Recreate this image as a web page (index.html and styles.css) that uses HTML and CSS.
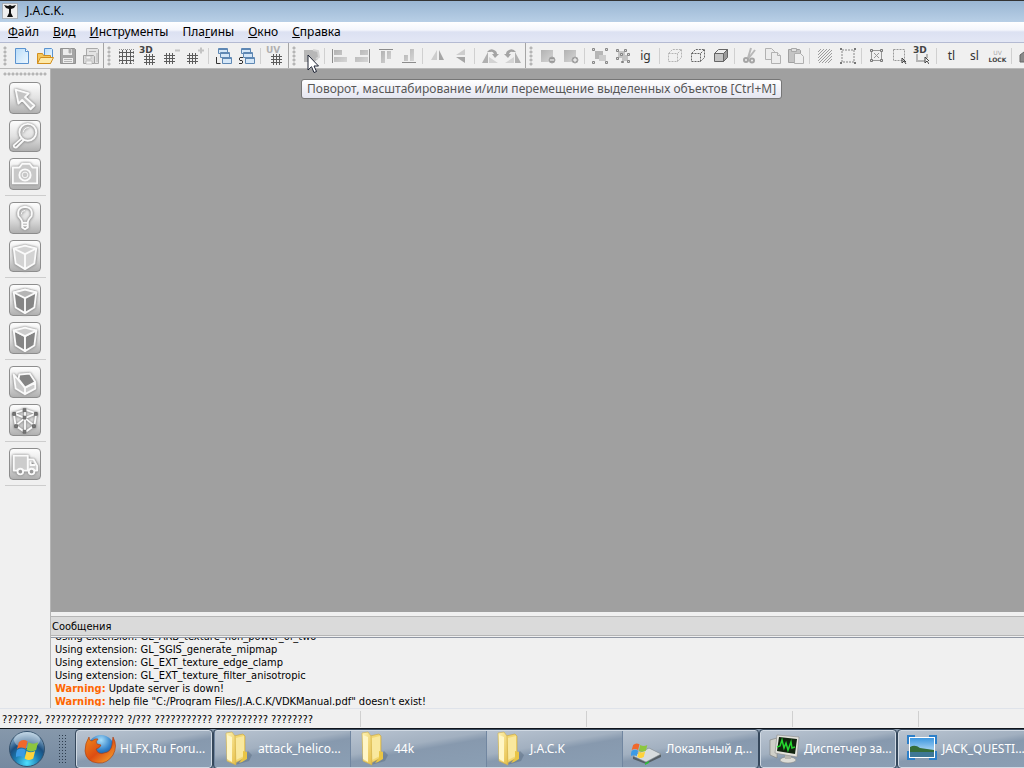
FILE: index.html
```html
<!DOCTYPE html>
<html lang="ru">
<head>
    <meta charset="UTF-8">
    <meta name="viewport" content="width=device-width, initial-scale=1.0">
    <title>J.A.C.K.</title>
    <link rel="stylesheet" href="styles.css">
</head>
<body>
    <svg class="defs" width="0" height="0" aria-hidden="true">
        <defs>
            <linearGradient id="gray" x1="0" y1="0" x2="1" y2="1"><stop offset="0" stop-color="#b2b2b2"/><stop offset="1" stop-color="#d6d6d6"/></linearGradient>
            <linearGradient id="paper" x1="0" y1="0" x2="1" y2="1"><stop offset="0" stop-color="#b9dcf9"/><stop offset="1" stop-color="#eef8ff"/></linearGradient>
            <linearGradient id="gold" x1="0" y1="0" x2="1" y2="1"><stop offset="0" stop-color="#fff6b8"/><stop offset="1" stop-color="#e6bd45"/></linearGradient>
            <radialGradient id="orb" cx=".5" cy=".9" r=".9"><stop offset="0" stop-color="#4fe0ff"/><stop offset=".4" stop-color="#1b78ae"/><stop offset=".62" stop-color="#1b4f80"/><stop offset="1" stop-color="#a9c8de"/></radialGradient>
            <radialGradient id="globe" cx=".5" cy=".2" r=".8"><stop offset="0" stop-color="#a7defa"/><stop offset=".5" stop-color="#2f7fc8"/><stop offset="1" stop-color="#132f70"/></radialGradient>
            <linearGradient id="fox" x1="0" y1="0" x2="1" y2="1"><stop offset="0" stop-color="#f08a1c"/><stop offset=".5" stop-color="#dd4d12"/><stop offset="1" stop-color="#f9b233"/></linearGradient>
            <linearGradient id="sky" x1="0" y1="0" x2="0" y2="1"><stop offset="0" stop-color="#3d97e0"/><stop offset="1" stop-color="#e2f4fd"/></linearGradient>
        </defs>
        <symbol id="grid" viewBox="0 0 11 11"><path d="M2.5 0v11M5.5 0v11M8.5 0v11M0 2.5h11M0 5.5h11M0 8.5h11" stroke="#5c5c5c" fill="none"/></symbol>
        <symbol id="windows" viewBox="0 0 18 18">
            <g fill="#d5e7f8" stroke="#5f88b4"><path d="M3.500 1.500h9v5h-9zM5.500 5.500h9v5h-9zM7.500 10.500h9v6h-9z"/><path d="M3.500 2.500h9M5.500 6.500h9M7.500 11.500h9"/></g>
        </symbol>
        <symbol id="folder" viewBox="0 0 32 36">
            <path d="M13 34l14-4 3-6-4-4z" fill="#5d6f83" opacity=".5"/>
            <path d="M12 5l9-2 2 2v22l-10 5z" fill="#f2d772" stroke="#c9a53c" stroke-width=".6"/>
            <path d="M14 7l8-2v20l-8 4z" fill="#f9e89e"/>
            <path d="M4 2l6-1 3 4 1 29-9-4z" fill="url(#gold)" stroke="#cfae4b" stroke-width=".6"/>
            <path d="M5 4l5 2v25l-5-3z" fill="#fff6c6"/>
            <path d="M21 20l4 1v7l-5 3-3 1 4-5z" fill="#e9c545"/>
        </symbol>
        <symbol id="flag" viewBox="0 0 24 22">
            <path d="M3 4q4-4 9-1l-2 8q-4-3-9 0z" fill="#f0682b"/>
            <path d="M13 4q5 3 10 0l-2 8q-5 3-10 0z" fill="#8dc63f"/>
            <path d="M1 12q5-3 9 0l-2 8q-4-3-9 0z" fill="#3c9be5"/>
            <path d="M11 13q4 3 9 0l-2 8q-5 3-9 0z" fill="#ffd33b"/>
        </symbol>
    </svg>

    <header class="titlebar">
        <svg class="app-icon" viewBox="0 0 16 16"><rect x=".5" y=".5" width="15" height="15" fill="#efefef" stroke="#8a8a8a" stroke-dasharray="1 1"/><path d="M2 2l4 1 2-1 2 1 4-1-2 3-3 1v4l2 4H5l2-4V6L4 5z" fill="#111"/></svg>
        <span>J.A.C.K.</span>
    </header>

    <nav class="menubar">
        <button><u>Ф</u>айл</button>
        <button><u>В</u>ид</button>
        <button><u>И</u>нструменты</button>
        <button>Пла<u>г</u>ины</button>
        <button><u>О</u>кно</button>
        <button><u>С</u>правка</button>
    </nav>

    <div class="toolbars">
        <div class="toolbar">
            <span class="grip"></span>
            <button aria-label="Новый"><svg viewBox="0 0 18 18"><path d="M2.500 1.500h10l3 3v12h-13z" fill="url(#paper)" stroke="#5b93cf"/><path d="M12.500 1.500v3h3" fill="#fff" stroke="#5b93cf"/></svg></button>
            <button aria-label="Открыть"><svg viewBox="0 0 18 18"><path d="M8.500 1.500h7l1 1v9h-8z" fill="url(#paper)" stroke="#5b93cf"/><path d="M1.500 16.500v-10h5l1 2h7v8z" fill="#f5c75c" stroke="#d28f1e"/><path d="M4.500 10.500h13l-3 6h-13z" fill="#fde9a9" stroke="#d28f1e"/></svg></button>
            <button aria-label="Сохранить"><svg viewBox="0 0 18 18"><path d="M1.500 1.500h14l1 1v14h-15z" fill="#a5a5a5" stroke="#929292"/><path d="M4 2h9v6H4zM4 11h10v5H4z" fill="#ececec"/><path d="M10 2h2v4h-2zM5 12.500h8M5 14.500h8" fill="#a0a0a0" stroke="#b5b5b5"/></svg></button>
            <button aria-label="Сохранить все"><svg viewBox="0 0 18 18"><path d="M4.500 8V1.500h11l1 1v14h-4" fill="#e3e3e3" stroke="#a9a9a9"/><path d="M7 4.500h7M15 6v9" stroke="#b5b5b5"/><path d="M1.500 8.500h10l1 1v7h-11z" fill="#d9d9d9" stroke="#a2a2a2"/><path d="M4 9h5v3H4zM4 14h6v3H4z" fill="#f3f3f3" stroke="#b0b0b0" stroke-width=".6"/></svg></button>
        </div>
        <div class="toolbar">
            <span class="grip"></span>
            <button aria-label="Сетка"><svg viewBox="0 0 18 18"><path d="M5.500 3v14M9.500 3v14M13.500 3v14M2 5.500h15M2 9.500h15M2 13.500h15" stroke="#5c5c5c"/><path d="M2.500 2v15M16.500 2v15M2 2.500h15M2 16.500h15" stroke="#8a8a8a" stroke-dasharray="1 1"/></svg></button>
            <button class="stacked" aria-label="Сетка 3D"><b>3D</b><svg viewBox="0 0 11 11"><use href="#grid"/></svg></button>
            <button aria-label="Сетка мельче"><svg viewBox="0 0 18 18"><use href="#grid" x="1" y="6" width="11" height="11"/><path d="M12 3.500h5" stroke="#c3c3c3" stroke-width="2"/></svg></button>
            <button aria-label="Сетка крупнее"><svg viewBox="0 0 18 18"><use href="#grid" x="1" y="6" width="11" height="11"/><path d="M12 3.500h6M15 .500v6" stroke="#c3c3c3" stroke-width="2"/></svg></button>
            <span class="sep"></span>
            <button aria-label="Загрузить окна"><svg viewBox="0 0 18 18"><use href="#windows"/><path d="M1.500 10v6.500h4" fill="none" stroke="#333"/></svg></button>
            <button aria-label="Сохранить окна"><svg viewBox="0 0 18 18"><use href="#windows"/><path d="M5 10.500H2l-.5.5v2l.5.5h2l.5.5v2l-.5.500H1" fill="none" stroke="#333"/></svg></button>
            <span class="sep"></span>
            <button class="stacked muted" aria-label="Сетка UV"><b>UV</b><svg viewBox="0 0 11 11"><use href="#grid"/></svg></button>
        </div>
        <div class="toolbar">
            <span class="grip"></span>
            <button class="transform" aria-label="Преобразование"><svg viewBox="0 0 18 18"><path d="M2 3h11l3 2v7l-4 3H2z" fill="#b7b7b7"/><path d="M11 3l5 1 1 6-3 2" fill="none" stroke="#d3d3d3" stroke-width="2"/></svg>
                <svg class="cursor" viewBox="0 0 12 20"><path d="M1 1v15l3.500-3.300L7 18.500l2.500-1L7 12h4.500z" fill="#fff" stroke="#1c2233"/></svg></button>
            <span class="sep"></span>
            <button aria-label="По левому краю"><svg viewBox="0 0 18 18"><path d="M1.500 2v14" stroke="#8c8c8c"/><path d="M3 3h8v5H3zM3 10h13v5H3z" fill="url(#gray)"/></svg></button>
            <button aria-label="По правому краю"><svg viewBox="0 0 18 18"><path d="M15.500 2v14" stroke="#8c8c8c"/><path d="M6 3h8v5H6zM1 10h13v5H1z" fill="url(#gray)"/></svg></button>
            <button aria-label="По верхнему краю"><svg viewBox="0 0 18 18"><path d="M2 2.500h14" stroke="#8c8c8c"/><path d="M4 4h4v12H4zM10 4h4v8h-4z" fill="url(#gray)"/></svg></button>
            <button aria-label="По нижнему краю"><svg viewBox="0 0 18 18"><path d="M2 15.500h14" stroke="#8c8c8c"/><path d="M4 8h4v6H4zM10 2h4v12h-4z" fill="url(#gray)"/></svg></button>
            <span class="sep"></span>
            <button aria-label="Отразить по горизонтали"><svg viewBox="0 0 18 18"><path d="M8 3v10H2z" fill="#cdcdcd"/><path d="M10 3v10h5z" fill="#a5a5a5"/></svg></button>
            <button aria-label="Отразить по вертикали"><svg viewBox="0 0 18 18"><path d="M13 2v6H4z" fill="#cdcdcd"/><path d="M13 10v6L4 10z" fill="#a5a5a5"/></svg></button>
            <span class="sep"></span>
            <button aria-label="Повернуть влево"><svg viewBox="0 0 18 18"><path d="M7 5v11H1z" fill="#b0b0b0"/><path d="M8 16v-6l9 6z" fill="#d3d3d3"/><path d="M6 5q3-4 7-2 3 1 3 4h2l-4 4-3-4h2q-1-3-4-2z" fill="#a4a4a4"/></svg></button>
            <button aria-label="Повернуть вправо"><svg viewBox="0 0 18 18"><path d="M11 5v11h6z" fill="#b0b0b0"/><path d="M10 16v-6l-9 6z" fill="#d3d3d3"/><path d="M12 5Q9 1 5 3 2 4 2 7H0l4 4 3-4H5q1-3 4-2z" fill="#a4a4a4"/></svg></button>
        </div>
        <div class="toolbar">
            <span class="grip"></span>
            <button aria-label="Исключить"><svg viewBox="0 0 18 18"><path d="M2 3h12v12H2z" fill="url(#gray)"/><circle cx="13" cy="13" r="3" fill="#999" stroke="#a5a5a5"/><path d="M11 13h4" stroke="#fff"/></svg></button>
            <button aria-label="Добавить"><svg viewBox="0 0 18 18"><path d="M2 3h12v12H2z" fill="url(#gray)"/><circle cx="13" cy="13" r="3" fill="#999" stroke="#a5a5a5"/><path d="M11 13h4M13 11v4" stroke="#fff"/></svg></button>
            <span class="sep"></span>
            <button aria-label="Сгруппировать"><svg viewBox="0 0 18 18"><path d="M4 4h8v8H4z" fill="#b6b6b6"/><path d="M8 8h7v6H8z" fill="#ccc"/><path d="M1.500 1.500h2v2h-2zM14.500 1.500h2v2h-2zM1.500 14.500h2v2h-2zM14.500 14.500h2v2h-2z" fill="#ddd" stroke="#888"/></svg></button>
            <button aria-label="Разгруппировать"><svg viewBox="0 0 18 18"><path d="M4 4h7v7H4zM8 8h6v6H8z" fill="#c4c4c4"/><path d="M2.500 2.500h2v2h-2zM10.500 2.500h2v2h-2zM2.500 10.500h2v2h-2zM6.500 6.500h2v2h-2zM13.500 6.500h2v2h-2zM7.500 14.500h2v1h-2zM13.500 13.500h2v2h-2z" fill="#ddd" stroke="#858585"/></svg></button>
            <button class="letters">ig</button>
            <span class="sep"></span>
            <button aria-label="Скрыть выбранное"><svg viewBox="0 0 18 18"><path d="M2.500 6.500h9v8h-9zM2.500 6.500l4-4h9l-4 4M15.500 2.500v8l-4 4" fill="none" stroke="#b5b5b5" stroke-dasharray="2 1"/></svg></button>
            <button aria-label="Скрыть невыбранное"><svg viewBox="0 0 18 18"><path d="M2.500 6.500h9v8h-9zM2.500 6.500l4-4h9l-4 4M15.500 2.500v8l-4 4" fill="none" stroke="#666" stroke-dasharray="2 1"/></svg></button>
            <button aria-label="Показать все"><svg viewBox="0 0 18 18"><g stroke="#666"><path d="M2.500 6.500h9v8h-9z" fill="#c4c4c4"/><path d="M2.500 6.500l4-4h9l-4 4z" fill="#eee"/><path d="M15.500 2.500v8l-4 4v-8z" fill="#999"/></g></svg></button>
            <span class="sep"></span>
            <button aria-label="Вырезать"><svg viewBox="0 0 18 18"><path d="M10 1L7 11M14 3l-7 9" stroke="#b8b8b8" stroke-width="2"/><circle cx="5" cy="13" r="2" fill="none" stroke="#a5a5a5" stroke-width="2"/><circle cx="11" cy="13.500" r="2" fill="none" stroke="#a5a5a5" stroke-width="2"/></svg></button>
            <button aria-label="Копировать"><svg viewBox="0 0 18 18"><g fill="#ececec" stroke="#b1b1b1"><path d="M1.500 1.500h6l3 3v8h-9z"/><path d="M7.500 5.500h6l3 3v8h-9z"/><path d="M13.500 5.500v3h3"/></g></svg></button>
            <button aria-label="Вставить"><svg viewBox="0 0 18 18"><path d="M1.500 2.500h11l1 1v12h-12z" fill="#c4c4c4" stroke="#a0a0a0"/><path d="M4.500 1.500h5v3h-5z" fill="#e1e1e1" stroke="#a9a9a9"/><path d="M7.500 6.500h6l3 3v7h-9z" fill="#eee" stroke="#b0b0b0"/></svg></button>
            <span class="sep"></span>
            <button aria-label="Штриховка"><svg viewBox="0 0 18 18"><path d="M2 5l3-3M2 8l6-6M2 11l9-9M2 14l12-12M3 16L16 3M6 16L16 6M9 16l7-7M12 16l4-4" stroke="#9d9d9d"/></svg></button>
            <button aria-label="Выделение"><svg viewBox="0 0 18 18"><path d="M3 3h12v12H3z" fill="none" stroke="#bbb" stroke-width="2" stroke-dasharray="2 1"/><path d="M1 1h2v2H1zM15 1h2v2h-2zM1 15h2v2H1zM15 15h2v2h-2z" fill="#777"/></svg></button>
            <span class="sep"></span>
            <button aria-label="Область"><svg viewBox="0 0 18 18"><path d="M3.500 3.500h10v10h-10zM6 6l5 5M11 6l-5 5" fill="none" stroke="#999"/><path d="M2.500 2.500h2v2h-2zM12.500 2.500h2v2h-2zM2.500 12.500h2v2h-2zM12.500 12.500h2v2h-2z" fill="#ddd" stroke="#777"/></svg></button>
            <button aria-label="Выбор рамкой"><svg viewBox="0 0 18 18"><path d="M2.500 2.500h11v11h-11z" fill="none" stroke="#999" stroke-dasharray="2 1"/><path d="M11 11v5l2-2 2 3M11 11l4 4" stroke="#444" fill="none"/></svg></button>
            <button class="stacked pick" aria-label="Выбор в 3D"><b>3D</b><svg viewBox="0 0 14 11"><path d="M2 0v7h8M12 0v4" stroke="#b5b5b5" stroke-width="2" fill="none"/><path d="M10 3v6l2-2 2 3M10 3l4 4" stroke="#444" fill="none"/></svg></button>
            <span class="sep"></span>
            <button class="letters">tl</button>
            <button class="letters">sl</button>
            <button class="lock" aria-label="UV Lock"><span>UV</span><b>LOCK</b></button>
            <span class="sep"></span>
            <button aria-label="Грань"><svg viewBox="0 0 18 18"><path d="M2 15V8l8-6v13z" fill="#898989" stroke="#666"/></svg></button>
        </div>
    </div>

    <main class="main">
        <aside class="sidebar">
            <span class="hgrip"></span>
            <button aria-label="Выбор"><svg viewBox="0 0 32 32"><path d="M6 7l14 4-4 4 10 9-4 4-9-10-4 4z" fill="#c4c4c4"/></svg></button>
            <button aria-label="Масштаб"><svg viewBox="0 0 32 32"><path d="M13 18l-9 8q0 3 3 2l8-8"/><circle cx="19" cy="12" r="9"/><path d="M14 12q1-5 6-5" class="thin"/></svg></button>
            <button aria-label="Камера"><svg viewBox="0 0 32 32"><path d="M3 9h7l3-4h8l3 4h5v17H3z" fill="#c8c8c8"/><circle cx="16" cy="17" r="6"/><circle cx="16" cy="17" r="3" class="thin"/></svg></button>
            <hr>
            <button aria-label="Объект"><svg viewBox="0 0 32 32"><path d="M13 21q0-3-4-7-2-9 7-10 9 1 7 10-4 4-4 7zM13 21v5l3 2 3-2v-5M13 24h6"/><path d="M12 12q0-4 4-4" class="thin"/></svg></button>
            <button aria-label="Браш"><svg viewBox="0 0 32 32"><path d="M4 8l12-3 12 3-2 16-10 6-10-6z" fill="#d3d3d3"/><path d="M4 8l12 6 12-6M16 14v16"/></svg></button>
            <hr>
            <button aria-label="Текстуры"><svg viewBox="0 0 32 32"><path d="M4 8l12-3 12 3-2 16-10 6-10-6z" class="dark"/><path d="M4 8l12-3 12 3-12 6z" fill="#b5b5b5"/><path d="M16 14v16"/></svg></button>
            <button aria-label="Применить текстуру"><svg viewBox="0 0 32 32"><path d="M4 8l12 6v16L6 24z" class="dark"/><path d="M28 8l-12 6v16l10-6z" class="dark"/><path d="M4 8l12-3 12 3-12 6z" fill="#ccc"/></svg></button>
            <hr>
            <button aria-label="Отсечение"><svg viewBox="0 0 32 32"><path d="M4 8l12 14v7L6 23zM16 22l11-5v6l-11 6z" fill="#ccc"/><path d="M10 8l11-1 6 9-11 6-7-9z" class="dark"/></svg></button>
            <button aria-label="Вершины"><svg viewBox="0 0 32 32"><path d="M4 9l12-4 12 4-2 13-10 7-10-7zM4 9l12 5 12-5M16 5v24M6 22l10-8 10 8" class="edge"/><path d="M3 8h3v3H3zM14 4h3v3h-3zM26 8h3v3h-3zM14 12h3v3h-3zM5 21h3v3H5zM24 21h3v3h-3zM14 27h3v3h-3z" class="node"/></svg></button>
            <hr>
            <button aria-label="Путь"><svg viewBox="0 0 32 32"><path d="M4 7h15v16H4zM19 11h6l4 7v5H19zM22 13v4h5" fill="#ccc"/><circle cx="11" cy="24" r="3" fill="#999"/><circle cx="23" cy="24" r="3" fill="#999"/></svg></button>
            <hr>
        </aside>
        <div class="content">
            <div class="workspace"></div>
            <section class="messages">
                <h2>Сообщения</h2>
                <div class="log">
                    <ul>
                        <li>Using extension: GL_ARB_texture_non_power_of_two</li>
                        <li>Using extension: GL_SGIS_generate_mipmap</li>
                        <li>Using extension: GL_EXT_texture_edge_clamp</li>
                        <li>Using extension: GL_EXT_texture_filter_anisotropic</li>
                        <li><b>Warning:</b> Update server is down!</li>
                        <li><b>Warning:</b> help file "C:/Program Files/J.A.C.K/VDKManual.pdf" doesn't exist!</li>
                    </ul>
                </div>
            </section>
        </div>
        <div class="tooltip" role="tooltip">Поворот, масштабирование и/или перемещение выделенных объектов [Ctrl+M]</div>
    </main>

    <footer class="statusbar">
        <span class="hint">???????, ??????????????? ?/??? ??????????? ?????????? ????????</span>
        <span class="wide"></span>
        <span class="wide"></span>
        <span class="narrow"></span>
        <span class="rest"></span>
    </footer>

    <nav class="taskbar">
        <button class="start" aria-label="Пуск"><svg viewBox="0 0 38 38"><circle cx="19" cy="19" r="17.500" fill="url(#orb)" stroke="#34516c"/><ellipse cx="19" cy="10" rx="13" ry="8" fill="#fff" opacity=".35"/><use href="#flag" x="8" y="8" width="23" height="22"/></svg></button>
        <span class="dots"></span>
        <div class="tasks">
            <button class="task"><svg viewBox="0 0 32 36"><circle cx="17" cy="17" r="13" fill="url(#globe)"/><path d="M5 6q0 4 3 4 3-3 6-2-3 3-1 5l4 1q-1 3-5 4 2 6 8 4 7-1 8-8l1-8q5 9 0 18-6 9-15 8Q2 31 1 20 1 12 5 6z" fill="url(#fox)" stroke="#a83b0d" stroke-width=".6"/></svg><span>HLFX.Ru Foru...</span></button>
            <div class="task-group">
                <button class="task"><svg viewBox="0 0 32 36"><use href="#folder"/></svg><span>attack_helico...</span></button>
                <button class="task"><svg viewBox="0 0 32 36"><use href="#folder"/></svg><span>44k</span></button>
                <button class="task"><svg viewBox="0 0 32 36"><use href="#folder"/></svg><span>J.A.C.K</span></button>
                <button class="task"><svg viewBox="0 0 32 36"><path d="M3 25l16-8 12 6v3L16 33 3 28z" fill="#555f66"/><path d="M3 25l16-8 12 6-15 8z" fill="#d7dcde" stroke="#8a9499" stroke-width=".6"/><path d="M15 32l4-2v2l-4 2z" fill="#2fbd3a"/><use href="#flag" x="1" y="11" width="17" height="16"/></svg><span>Локальный д...</span></button>
            </div>
            <button class="task"><svg viewBox="0 0 32 36"><path d="M2 9l7-2v20l-7-3z" fill="#cfcfc8" stroke="#7d7d78" stroke-width=".6"/><ellipse cx="20" cy="29" rx="8" ry="3" fill="#dcdcd6" stroke="#8d8d88" stroke-width=".6"/><path d="M17 22h6v6h-6z" fill="#b7b7b1"/><path d="M9 4l22 2-2 20-22-4z" fill="#e4e4de" stroke="#888" stroke-width=".6"/><path d="M11 6l18 2-2 15-18-3z" fill="#10230f"/><path d="M9 16l3-1 2-6 2 8 2-5 2 7 3-8 1 6 3-1" fill="none" stroke="#25d62e" stroke-width="1.500"/></svg><span>Диспетчер за...</span></button>
            <button class="task"><svg viewBox="0 0 32 36"><path d="M1 4h8v5H6v4H1zM31 4h-8v5h3v4h5zM1 29h8v-5H6v-4H1zM31 29h-8v-5h3v-4h5z" fill="#2c7fc9"/><path d="M3 6h26v21H3z" fill="#fff"/><path d="M4 7h24v19H4z" fill="url(#sky)"/><path d="M4 16q5-3 10 1l14 2v3H4z" fill="#356c3a"/><path d="M4 21h24v5H4z" fill="#3f7795"/></svg><span>JACK_QUESTI...</span></button>
        </div>
    </nav>
</body>
</html>
```

FILE: styles.css
```css
* {
    box-sizing: border-box;
}

body {
    margin: 0;
    height: 100vh;
    display: flex;
    flex-direction: column;
    overflow: hidden;
    background-color: #f0f0f0;
    font-family: "Noto Sans", sans-serif;
    font-size: 12px;
    color: #000;
}

button {
    margin: 0;
    padding: 0;
    border: none;
    background: none;
    font: inherit;
    color: inherit;
}

svg {
    display: block;
    flex: none;
}

.defs {
    position: absolute;
}

.titlebar {
    flex: none;
    height: 22px;
    display: flex;
    align-items: center;
    gap: 8px;
    padding-left: 2px;
    padding-bottom: 2px;
    border-top: 1px solid #333;
    background: linear-gradient(#9ab6d3, #b8cfe6);
}

.app-icon {
    width: 16px;
    height: 16px;
}

.menubar {
    flex: none;
    height: 21px;
    display: flex;
    align-items: center;
    gap: 14px;
    padding-left: 8px;
    padding-bottom: 1px;
    border-bottom: 1px solid #b4bad2;
    background: linear-gradient(#fff, #f4f6fc 40%, #dce1f2 50%, #e3e7f5);
}

.toolbars {
    flex: none;
    height: 26px;
    display: flex;
    border-bottom: 1px solid #b9b9b9;
    background-color: #f0f0f0;
}

.toolbar {
    flex: none;
    display: flex;
    align-items: center;
    padding-right: 1px;
    border-right: 1px solid #a5a5a5;
}

.toolbar button {
    width: 23px;
    height: 24px;
    display: flex;
    align-items: center;
    justify-content: center;
}

.toolbar svg {
    width: 18px;
    height: 18px;
}

.grip {
    width: 10px;
    height: 20px;
    background: radial-gradient(circle, #b5b5b5 1px, transparent 2px) 3px 0 / 4px 4px repeat-y;
}

.sep {
    width: 6px;
    height: 16px;
    border-left: 1px solid #d0d0d0;
    margin-left: 2px;
    margin-right: -2px;
}

.toolbar .stacked {
    flex-direction: column;
    align-items: flex-start;
    padding-left: 2px;
    font: bold 9px/8px "DejaVu Sans", sans-serif;
    color: #444;
}

.toolbar .stacked svg {
    width: 11px;
    height: 11px;
    margin-left: 5px;
}

.toolbar .muted b {
    color: #b0b0b0;
}

.toolbar .pick svg {
    width: 14px;
    margin-left: 2px;
}

.toolbar .letters {
    font-size: 12px;
    color: #333;
}

.toolbar .lock {
    flex-direction: column;
    font: 6px/7px "DejaVu Sans", sans-serif;
    color: #aaa;
}

.lock b {
    color: #444;
}

.transform {
    position: relative;
}

.toolbar .cursor {
    position: absolute;
    left: 8px;
    top: 10px;
    width: 12px;
    height: 20px;
    z-index: 2;
}

.main {
    flex: 1;
    min-height: 0;
    display: flex;
    position: relative;
}

.sidebar {
    flex: none;
    width: 51px;
    display: flex;
    flex-direction: column;
    align-items: center;
    gap: 6px;
    border-right: 1px solid #b5b5b5;
}

.hgrip {
    width: 44px;
    height: 7px;
    background: radial-gradient(circle, #b5b5b5 1px, transparent 2px) 0 3px / 4px 4px repeat-x;
}

.sidebar button {
    flex: none;
    width: 32px;
    height: 32px;
    border: 1px solid #8d8d8d;
    border-radius: 4px;
    background: linear-gradient(#fdfdfd, #e2e2e2 50%, #b0b0b0);
}

.sidebar svg {
    width: 30px;
    height: 30px;
    fill: none;
    stroke: #fafafa;
    stroke-width: 2;
    stroke-linejoin: round;
    filter: drop-shadow(0 0 1px #8a8a8a) drop-shadow(0 1px 1px #aaa);
}

.sidebar .thin {
    stroke-width: 1;
}

.sidebar .edge {
    stroke-width: 2;
}

.sidebar .dark {
    fill: #858585;
}

.sidebar .node {
    fill: #777;
    stroke: #666;
    stroke-width: 1;
}

.sidebar hr {
    width: 41px;
    margin: -1px 0 0;
    border: none;
    border-top: 1px solid #cdcdcd;
}

.content {
    flex: 1;
    min-width: 0;
    display: flex;
    flex-direction: column;
}

.workspace {
    flex: 1;
    background-color: #a0a0a0;
}

.messages {
    padding-top: 4px;
    font-family: "DejaVu Sans Condensed", sans-serif;
    font-size: 11px;
}

.messages h2 {
    margin: 0 0 1px;
    padding-top: 1px;
    padding-left: 1px;
    border: 1px solid #b5b5b5;
    border-right: none;
    border-left: none;
    background-color: #dadada;
    font-size: 11px;
    font-weight: normal;
    line-height: 17px;
}

.log {
    height: 69px;
    margin-bottom: 2px;
    display: flex;
    align-items: flex-end;
    overflow: hidden;
    border-top: 1px solid #8f96a3;
}

.log ul {
    margin: 0 0 -2px;
    padding: 0 0 0 4px;
    list-style: none;
    line-height: 13px;
}

.log b {
    color: #ff6600;
}

.statusbar {
    flex: none;
    height: 20px;
    display: flex;
    align-items: center;
    border-top: 1px solid #dfe3ea;
    font-family: "DejaVu Sans Condensed", sans-serif;
    font-size: 11px;
}

.statusbar span {
    height: 16px;
    border-left: 1px solid #d0d0d0;
}

.statusbar .hint {
    width: 360px;
    padding-left: 2px;
    border: none;
    line-height: 18px;
}

.statusbar .wide {
    flex: 0 1 226px;
}

.statusbar .wide + .wide {
    flex-basis: 206px;
}

.statusbar .narrow {
    flex: 0 1 126px;
}

.taskbar {
    flex: none;
    height: 40px;
    display: flex;
    align-items: center;
    border-top: 1px solid #10151c;
    background: linear-gradient(#8698ab, #7589a0);
    color: #fff;
}

.start {
    flex: none;
    width: 54px;
    display: flex;
    justify-content: center;
}

.start svg {
    width: 38px;
    height: 38px;
}

.dots {
    flex: none;
    width: 9px;
    height: 30px;
    margin: 0 9px 0 4px;
    background: radial-gradient(circle, #2e3d4e 1px, transparent 1px) 0 0 / 3px 3px;
}

.tasks {
    display: flex;
    gap: 2px;
}

.task-group {
    flex: none;
    display: flex;
    border: 1px solid #d0d9e3;
    border-left: none;
    border-right: none;
    border-radius: 3px;
    outline: 1px solid #35475b;
}

.task {
    flex: none;
    width: 136px;
    height: 38px;
    display: flex;
    align-items: center;
    gap: 4px;
    padding-left: 7px;
    border: 1px solid #d0d9e3;
    border-radius: 3px;
    outline: 1px solid #35475b;
    background: linear-gradient(170deg, #b9c4d1, #a2b0c0 40%, #8799ae 52%, #8b9fb4);
    white-space: nowrap;
}

.task-group .task {
    height: 36px;
    border: none;
    border-left: 1px solid #7186a0;
    border-radius: 0;
    outline: none;
}

.task svg {
    width: 32px;
    height: 36px;
}

.tooltip {
    position: absolute;
    left: 301px;
    top: 10px;
    padding: 0 5px;
    border: 1px solid #767676;
    border-radius: 3px;
    background: linear-gradient(#fff, #e4e5f0);
    color: #575757;
    line-height: 18px;
    white-space: nowrap;
}
```
